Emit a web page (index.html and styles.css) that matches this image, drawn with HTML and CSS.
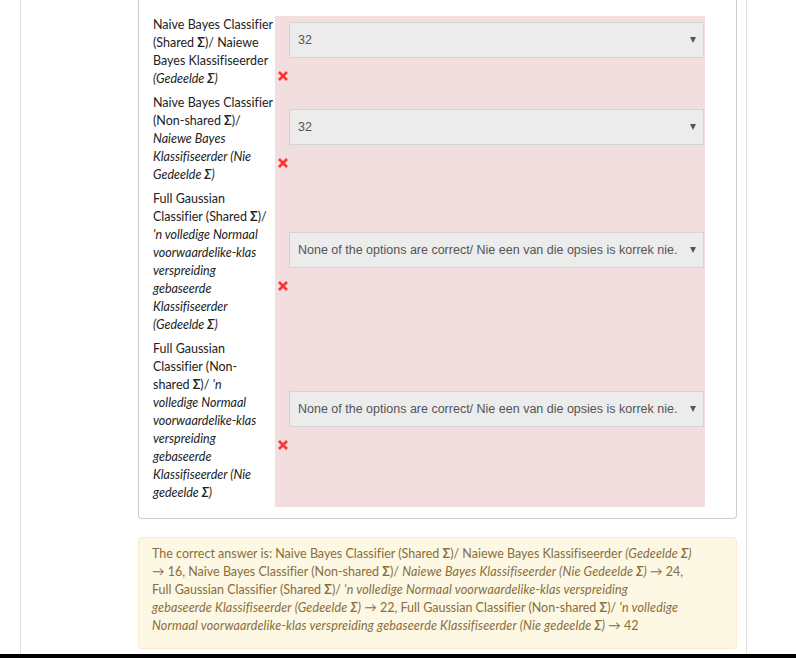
FILE: index.html
```html
<!DOCTYPE html>
<html lang="en">
<head>
<meta charset="utf-8">
<title>Question review</title>
<link rel="stylesheet" href="styles.css">
</head>
<body>
<div class="page">
  <div class="info"></div>
  <div class="content">
    <div class="card">
      <table class="answer">
        <tr>
          <td class="label">Naive Bayes Classifier (Shared <b>Σ</b>)/ Naiewe Bayes Klassifiseerder <i>(Gedeelde <b>Σ</b>)</i></td>
          <td class="control">
            <div class="select"><span>32</span><span class="caret"></span></div>
            <div class="mark"><svg class="x" viewBox="0 0 12 12" width="12" height="12"><path d="M2 2 L10 10 M10 2 L2 10"/></svg></div>
          </td>
        </tr>
        <tr>
          <td class="label">Naive Bayes Classifier (Non-shared <b>Σ</b>)/ <i>Naiewe Bayes Klassifiseerder (Nie Gedeelde <b>Σ</b>)</i></td>
          <td class="control">
            <div class="select"><span>32</span><span class="caret"></span></div>
            <div class="mark"><svg class="x" viewBox="0 0 12 12" width="12" height="12"><path d="M2 2 L10 10 M10 2 L2 10"/></svg></div>
          </td>
        </tr>
        <tr>
          <td class="label">Full Gaussian Classifier (Shared <b>Σ</b>)/ <i>'n volledige Normaal voorwaardelike-klas verspreiding gebaseerde Klassifiseerder (Gedeelde <b>Σ</b>)</i></td>
          <td class="control">
            <div class="select"><span>None of the options are correct/ Nie een van die opsies is korrek nie.</span><span class="caret"></span></div>
            <div class="mark"><svg class="x" viewBox="0 0 12 12" width="12" height="12"><path d="M2 2 L10 10 M10 2 L2 10"/></svg></div>
          </td>
        </tr>
        <tr class="last">
          <td class="label">Full Gaussian Classifier (Non-<br>shared <b>Σ</b>)/ <i>'n<br>volledige Normaal voorwaardelike-klas verspreiding gebaseerde Klassifiseerder (Nie gedeelde <b>Σ</b>)</i></td>
          <td class="control">
            <div class="select"><span>None of the options are correct/ Nie een van die opsies is korrek nie.</span><span class="caret"></span></div>
            <div class="mark"><svg class="x" viewBox="0 0 12 12" width="12" height="12"><path d="M2 2 L10 10 M10 2 L2 10"/></svg></div>
          </td>
        </tr>
      </table>
    </div>
    <div class="feedback">The correct answer is: Naive Bayes Classifier (Shared <b>Σ</b>)/ Naiewe Bayes Klassifiseerder <i>(Gedeelde <b>Σ</b>)</i><br>→&nbsp;16, Naive Bayes Classifier (Non-shared <b>Σ</b>)/ <i>Naiewe Bayes Klassifiseerder (Nie Gedeelde <b>Σ</b>)</i> →&nbsp;24,<br>Full Gaussian Classifier (Shared <b>Σ</b>)/ <i>'n volledige Normaal voorwaardelike-klas verspreiding<br>gebaseerde Klassifiseerder (Gedeelde <b>Σ</b>)</i> →&nbsp;22, Full Gaussian Classifier (Non-shared <b>Σ</b>)/ <i>'n volledige<br>Normaal voorwaardelike-klas verspreiding gebaseerde Klassifiseerder (Nie gedeelde <b>Σ</b>)</i> →&nbsp;42</div>
  </div>
</div>
<div class="footer"></div>
</body>
</html>
```
FILE: styles.css
```css
html, body {
  margin: 0;
  padding: 0;
  overflow: hidden;
  background: #fff;
}
body {
  font-family: Lato, "Open Sans", sans-serif;
  font-size: 12.5px;
  line-height: 18px;
  font-variant-ligatures: none;
  color: #222;
}
.page {
  display: flex;
  margin-left: 20px;
  width: 727px;
  height: 654px;
  box-sizing: border-box;
  border-left: 1px solid #e2e2e2;
  border-right: 1px solid #e2e2e2;
  overflow: hidden;
}
.info {
  width: 117px;
  flex: none;
}
.content {
  width: 599px;
  flex: none;
}
.card {
  border: 1px solid #cdcdcd;
  border-top: 0;
  border-radius: 0 0 4px 4px;
  padding: 16px 14px 11px;
}
.answer {
  border-collapse: collapse;
}
.answer td {
  padding: 0;
}
.answer .label {
  width: 122px;
  vertical-align: top;
  padding-bottom: 6px;
}
.answer .last .label {
  padding-bottom: 5px;
}
.answer .control {
  background: #f2dede;
  vertical-align: middle;
  padding: 0 1px 0 2px;
}
.select {
  margin-left: 12px;
  width: 415px;
  height: 36px;
  box-sizing: border-box;
  border: 1px solid #d4d4d4;
  background: #ececec;
  display: flex;
  align-items: center;
  justify-content: space-between;
  padding: 0 7px 0 8px;
  font-family: "Liberation Sans", Arial, sans-serif;
  font-size: 12.5px;
  color: #555;
  white-space: nowrap;
}
.caret {
  width: 0;
  height: 0;
  border-left: 3px solid transparent;
  border-right: 3px solid transparent;
  border-top: 6px solid #555;
}
.mark {
  height: 30px;
  box-sizing: border-box;
  padding-top: 12px;
}
.x {
  display: block;
  fill: none;
  stroke: #f33;
  stroke-width: 2.6;
}
.feedback {
  margin-top: 18px;
  border: 1px solid #faebcc;
  border-radius: 4px;
  background: #fcf8e3;
  color: #8a6d3b;
  padding: 7px 13px 13px;
}
.feedback i {
  letter-spacing: 0.15px;
}
.footer {
  height: 4px;
  background: #000;
}
```
